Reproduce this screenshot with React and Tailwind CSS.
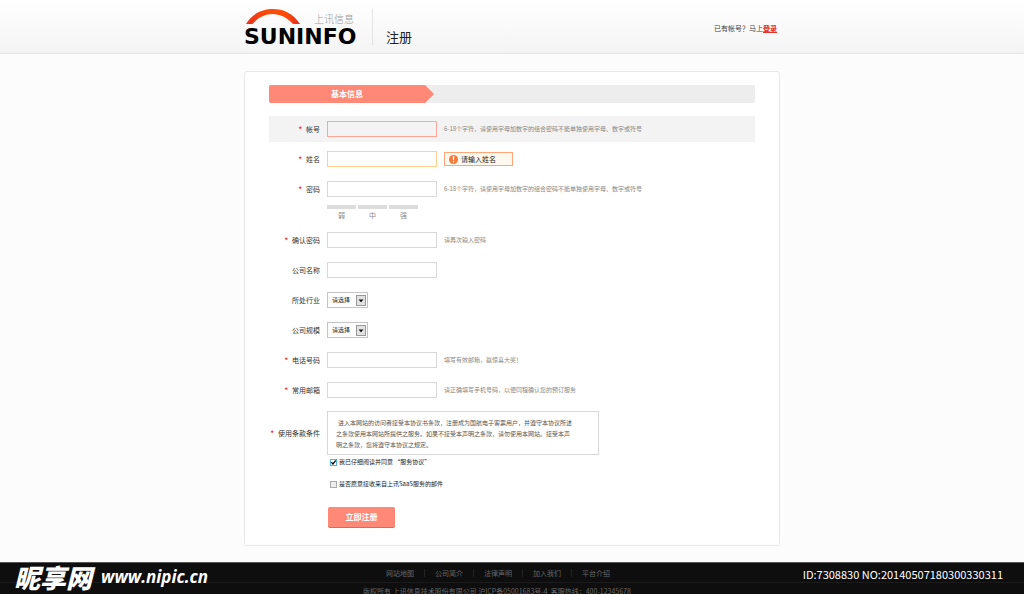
import React, { useState } from 'react';

const fieldClass = 'w-[110px] h-4 shrink-0 border px-1 text-[7px] outline-none';

function Label({ htmlFor, required, children }) {
  return (
    <label htmlFor={htmlFor} className="w-[51px] shrink-0 flex items-center justify-end gap-1 whitespace-nowrap text-[#333]">
      {required && <span className="text-[#f22] font-bold">*</span>}
      {children}
    </label>
  );
}

function Row({ id, label, required, active, children }) {
  return (
    <div className={`h-[26px] flex items-center gap-[7px] ${active ? 'bg-[#f3f3f3]' : ''}`}>
      <Label htmlFor={id} required={required}>{label}</Label>
      {children}
    </div>
  );
}

function Hint({ children }) {
  return <span className="text-[6px] text-[#888] whitespace-nowrap">{children}</span>;
}

function Select({ id }) {
  return (
    <div className="relative">
      <select id={id} className="block appearance-none w-[41px] h-4 border border-[#c4c4c4] bg-white pl-1 text-[6px] text-[#222] outline-none">
        <option>请选择</option>
      </select>
      <svg className="absolute right-[2px] top-[3px] w-[10px] h-[11px] pointer-events-none" viewBox="0 0 10 11">
        <rect x=".5" y=".5" width="9" height="10" fill="#e2e2e2" stroke="#999" />
        <path d="M2.5 4.5h5L5 7.2z" fill="#111" />
      </svg>
    </div>
  );
}

function Check({ id, checked, onChange, children }) {
  return (
    <div className="flex items-center gap-[2px] h-2">
      <span className="relative flex">
        <input
          id={id}
          type="checkbox"
          checked={checked}
          onChange={onChange}
          className="appearance-none w-[7px] h-[7px] border border-[#aaa] bg-[#eee] checked:border-[#51b5e6] checked:bg-white"
        />
        {checked && (
          <svg className="absolute inset-0 w-[7px] h-[7px] pointer-events-none" viewBox="0 0 7 7" fill="none" stroke="#111" strokeWidth="1.3">
            <path d="M1.4 3.2 3 5 5.7 1.5" />
          </svg>
        )}
      </span>
      <label htmlFor={id} className="text-[6px] text-[#222] whitespace-nowrap">{children}</label>
    </div>
  );
}

const footerLinks = ['网站地图', '公司简介', '法律声明', '加入我们', '平台介绍'];
const strengths = ['弱', '中', '强'];

export default function App() {
  const [agree, setAgree] = useState(true);
  const [mail, setMail] = useState(false);

  return (
    <div className="relative min-h-screen flex flex-col bg-[#fcfcfc] text-[7px] leading-[8px] font-['Noto_Sans_CJK_SC',sans-serif]">
      {/* Header */}
      <header className="bg-linear-to-b from-white to-[#f4f4f4] border-b border-[#e6e6e6]">
        <div className="max-w-[536px] mx-auto h-[53px] flex items-start">
          <a href="#" className="block w-[112px] pt-[9px]">
            <div className="flex items-end justify-between px-[2px]">
              <svg className="w-[54px] h-[15px]" viewBox="0 0 54 15">
                <defs>
                  <linearGradient id="arc" x1="0" x2="1">
                    <stop offset="0" stopColor="#e8321c" />
                    <stop offset=".4" stopColor="#ff4a08" />
                    <stop offset=".75" stopColor="#ff4a08" />
                    <stop offset="1" stopColor="#e02d20" />
                  </linearGradient>
                </defs>
                <path d="M0 15C7 4 17 0 27 0S47 4 54 15H47C41 8.5 34 5 26.500 5S12 8.500 6.500 15Z" fill="url(#arc)" />
              </svg>
              <span className="text-[10px] leading-[10px] text-[#999] font-light">上讯信息</span>
            </div>
            <div className="mt-1 text-[22px] leading-[18px] font-bold text-black font-['DejaVu_Sans',sans-serif]">SUNINFO</div>
          </a>
          <div className="mt-[9px] ml-4 h-9 border-l border-[#e4e4e4]" />
          <h1 className="mt-[29px] ml-[13px] text-[13px] leading-4 text-[#222]">注册</h1>
          <p className="mt-6 ml-auto pr-[3px] text-[#444]">
            已有帐号？马上<a href="#" className="font-bold text-[#e3342b] underline">登录</a>
          </p>
        </div>
      </header>

      {/* Form card */}
      <main className="w-full max-w-[536px] mx-auto mt-[17px] mb-4 bg-white border border-[#e8e8e8] rounded-[3px] px-6 pt-[13px] pb-[17px]">
        <div className="h-[18px] flex rounded-[2px] overflow-hidden bg-[#ededed]">
          <div className="w-[156px] flex items-center justify-center text-[8px] font-bold text-white bg-[#ff8877]">
            基本信息
          </div>
          <svg className="w-[9px] h-[18px]" viewBox="0 0 9 18"><path d="M0 0 9 9 0 18Z" fill="#ff8877" /></svg>
        </div>

        <form onSubmit={(e) => e.preventDefault()} className="mt-[13px]">
          <div className="flex flex-col gap-1">
            <Row id="account" label="帐号" required active>
              <input id="account" className={`${fieldClass} border-[#ffa69b] bg-[#f3f3f3]`} />
              <Hint>6-18个字符，请使用字母加数字的组合密码不能单独使用字母、数字或符号</Hint>
            </Row>
            <Row id="name" label="姓名" required>
              <input id="name" className={`${fieldClass} border-[#ffd08f] bg-white`} />
              <div role="alert" className="w-[69px] h-[14px] flex items-center gap-[3px] pl-1 border border-[#ffa578] bg-[#fff8ef] text-[#222]">
                <svg className="w-[9px] h-[9px]" viewBox="0 0 9 9">
                  <circle cx="4.500" cy="4.500" r="4.500" fill="#f5793a" />
                  <path d="M3.700 1.300h1.600L5 5.200H4z" fill="#fff" />
                  <circle cx="4.500" cy="6.800" r=".8" fill="#fff" />
                </svg>
                请输入姓名
              </div>
            </Row>
            <Row id="password" label="密码" required>
              <input id="password" type="password" className={`${fieldClass} border-[#d8d8d8] bg-white`} />
              <Hint>6-18个字符，请使用字母加数字的组合密码不能单独使用字母、数字或符号</Hint>
            </Row>
          </div>

          <div className="flex gap-[2px] pl-[58px] mt-[3px] mb-2">
            {strengths.map(s => (
              <div key={s} className="w-[29px] text-center text-[#888]">
                <div className="h-1 mb-[2px] bg-[#dcdcdc]" />
                {s}
              </div>
            ))}
          </div>

          <div className="flex flex-col gap-1">
            <Row id="confirm" label="确认密码" required>
              <input id="confirm" type="password" className={`${fieldClass} border-[#d8d8d8] bg-white`} />
              <Hint>请再次输入密码</Hint>
            </Row>
            <Row id="company" label="公司名称">
              <input id="company" className={`${fieldClass} border-[#d8d8d8] bg-white`} />
            </Row>
            <Row id="industry" label="所处行业"><Select id="industry" /></Row>
            <Row id="size" label="公司规模"><Select id="size" /></Row>
            <Row id="phone" label="电话号码" required>
              <input id="phone" type="tel" className={`${fieldClass} border-[#d8d8d8] bg-white`} />
              <Hint>填写有效邮箱，赢惊喜大奖！</Hint>
            </Row>
            <Row id="email" label="常用邮箱" required>
              <input id="email" type="email" className={`${fieldClass} border-[#d8d8d8] bg-white`} />
              <Hint>请正确填写手机号码，以便同程确认您的预订服务</Hint>
            </Row>
          </div>

          <div className="mt-2 flex items-center gap-[7px]">
            <Label htmlFor="agree" required>使用条款条件</Label>
            <div className="w-[272px] h-11 border border-[#d8d8d8] px-2 py-[5px] text-[6px] leading-[11px] text-[#555]">
              <p className="indent-[2px]">进入本网站的访问者接受本协议书条款，注册成为国航电子客票用户，并遵守本协议所述</p>
              <p>之条款使用本网站所提供之服务。如果不接受本声明之条款，请勿使用本网站。接受本声</p>
              <p>明之条款，您将遵守本协议之规定。</p>
            </div>
          </div>

          <div className="pl-[61px] mt-[3px] flex flex-col items-start gap-[14px]">
            <Check id="agree" checked={agree} onChange={e => setAgree(e.target.checked)}>我已仔细阅读并同意 “服务协议”</Check>
            <Check id="mail" checked={mail} onChange={e => setMail(e.target.checked)}>是否愿意接收来自上讯SaaS服务的邮件</Check>
          </div>

          <button type="submit" className="block ml-[59px] mt-[19px] mb-px w-[67px] h-5 rounded-[2px] bg-[#ff8877] text-[8px] font-bold text-white shadow-[0_1px_0_#c9705f]">
            立即注册
          </button>
        </form>
      </main>

      {/* Footer */}
      <footer className="flex-1 bg-[#0e0e0e] border-t border-[#555] text-[#666] overflow-hidden">
        <nav className="h-[19px] flex items-center justify-center pr-7">
          {footerLinks.map((text, i) => (
            <a key={text} href="#" className={`px-[10px] ${i > 0 ? 'border-l border-[#222]' : ''}`}>{text}</a>
          ))}
        </nav>
        <p className="border-t border-[#1b1b1b] pt-[5px] pr-[30px] leading-[6px] text-center text-[#666] whitespace-pre">
          版权所有 上讯信息技术股份有限公司 沪ICP备05001683号-4  客服热线：400-12345678
        </p>
      </footer>

      {/* Watermark */}
      <div className="absolute left-[14px] bottom-[5px] flex items-center gap-[9px] text-white italic whitespace-nowrap">
        <span className="text-[26px] leading-6 font-black">昵享网</span>
        <span className="text-[17px] leading-6 font-bold font-['Open_Sans',sans-serif]">www.nipic.cn</span>
      </div>
      <div className="absolute right-[21px] bottom-[12px] text-[11px] leading-4 text-white whitespace-nowrap">
        ID:7308830 NO:20140507180300330311
      </div>
    </div>
  );
}
